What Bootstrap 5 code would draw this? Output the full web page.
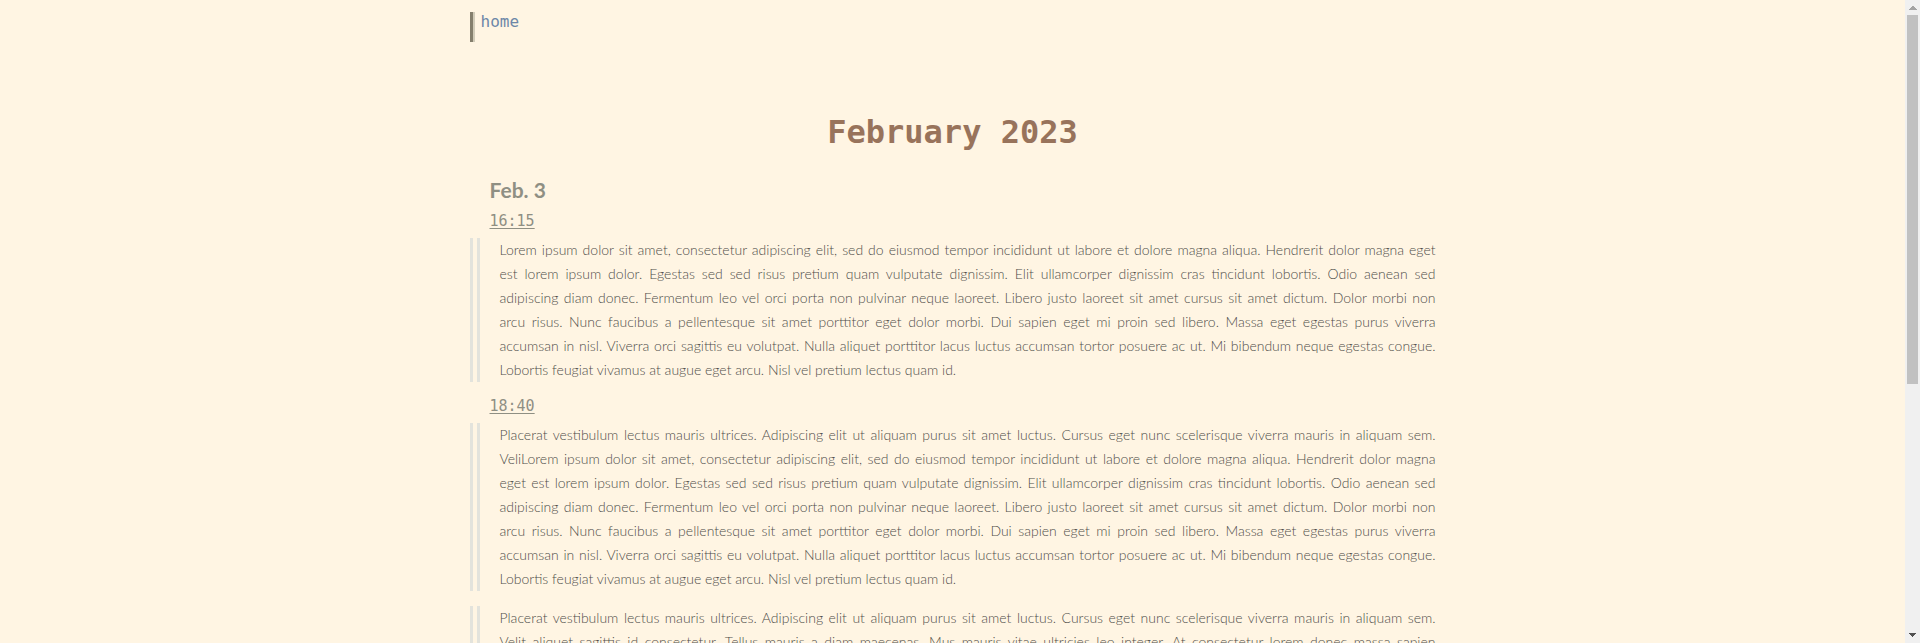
<!DOCTYPE html>
<html lang="en">
<head>
<meta charset="utf-8">
<meta name="viewport" content="width=device-width, initial-scale=1">
<title>February 2023</title>
<link rel="stylesheet" href="https://cdn.jsdelivr.net/npm/bootstrap@5.3.0/dist/css/bootstrap.min.css">
<style>
  body { background: #fff5e3; color: #4f4e4a; }
  .journal { max-width: 966px; }
  .mono { font-family: "DejaVu Sans Mono", monospace; }
  .site-nav { height: 30px; margin-top: 12px; border-left: 3px solid #857f6d; box-shadow: inset 2px 0 #d2ccb9; padding-left: 8px; }
  .site-nav a { color: #6d87a8; font-size: 16px; line-height: 20px; }
  .month { color: #98735b; font-size: 32px; line-height: 40px; margin-top: 70px; }
  .day { color: #8f8f83; font-family: Lato, sans-serif; font-size: 21px; line-height: 28px; margin: 24px 0 0 20px; }
  .stamp { color: #8f8f83; font-size: 15px; line-height: 19px; margin: 8px 0 7px 20px; }
  .stamp a { color: inherit; text-underline-offset: 2px; }
  .entry { border-left: 10px double #e3e3dc; padding-left: 20px; font-family: Lato, sans-serif; font-weight: 300; font-size: 14px; line-height: 24px; margin-bottom: 15px; }
  .entry span { display: block; white-space: nowrap; text-align-last: justify; }
  .entry span.end { text-align-last: left; }
  .scroll-rail { width: 15px; background: #f0f0f0; }
  .scroll-thumb { width: 11px; height: 369px; background: #c1c1c1; }
</style>
</head>
<body class="d-flex vh-100 overflow-hidden">
<div class="flex-grow-1 overflow-hidden">
  <div class="journal mx-auto">
    <nav class="site-nav mono d-flex align-items-start"><a href="#" class="text-decoration-none">home</a></nav>
    <main>
      <h1 class="month mono fw-bold text-center mb-0">February 2023</h1>
      <h2 class="day fw-bold">Feb. 3</h2>
      <div class="stamp mono"><a href="#t1615" id="t1615">16:15</a></div>
      <p class="entry">
        <span>Lorem ipsum dolor sit amet, consectetur adipiscing elit, sed do eiusmod tempor incididunt ut labore et dolore magna aliqua. Hendrerit dolor magna eget</span>
        <span>est lorem ipsum dolor. Egestas sed sed risus pretium quam vulputate dignissim. Elit ullamcorper dignissim cras tincidunt lobortis. Odio aenean sed</span>
        <span>adipiscing diam donec. Fermentum leo vel orci porta non pulvinar neque laoreet. Libero justo laoreet sit amet cursus sit amet dictum. Dolor morbi non</span>
        <span>arcu risus. Nunc faucibus a pellentesque sit amet porttitor eget dolor morbi. Dui sapien eget mi proin sed libero. Massa eget egestas purus viverra</span>
        <span>accumsan in nisl. Viverra orci sagittis eu volutpat. Nulla aliquet porttitor lacus luctus accumsan tortor posuere ac ut. Mi bibendum neque egestas congue.</span>
        <span class="end">Lobortis feugiat vivamus at augue eget arcu. Nisl vel pretium lectus quam id.</span>
      </p>
      <div class="stamp mono"><a href="#t1840" id="t1840">18:40</a></div>
      <p class="entry">
        <span>Placerat vestibulum lectus mauris ultrices. Adipiscing elit ut aliquam purus sit amet luctus. Cursus eget nunc scelerisque viverra mauris in aliquam sem.</span>
        <span>VeliLorem ipsum dolor sit amet, consectetur adipiscing elit, sed do eiusmod tempor incididunt ut labore et dolore magna aliqua. Hendrerit dolor magna</span>
        <span>eget est lorem ipsum dolor. Egestas sed sed risus pretium quam vulputate dignissim. Elit ullamcorper dignissim cras tincidunt lobortis. Odio aenean sed</span>
        <span>adipiscing diam donec. Fermentum leo vel orci porta non pulvinar neque laoreet. Libero justo laoreet sit amet cursus sit amet dictum. Dolor morbi non</span>
        <span>arcu risus. Nunc faucibus a pellentesque sit amet porttitor eget dolor morbi. Dui sapien eget mi proin sed libero. Massa eget egestas purus viverra</span>
        <span>accumsan in nisl. Viverra orci sagittis eu volutpat. Nulla aliquet porttitor lacus luctus accumsan tortor posuere ac ut. Mi bibendum neque egestas congue.</span>
        <span class="end">Lobortis feugiat vivamus at augue eget arcu. Nisl vel pretium lectus quam id.</span>
      </p>
      <p class="entry">
        <span>Placerat vestibulum lectus mauris ultrices. Adipiscing elit ut aliquam purus sit amet luctus. Cursus eget nunc scelerisque viverra mauris in aliquam sem.</span>
        <span>Velit aliquet sagittis id consectetur. Tellus mauris a diam maecenas. Mus mauris vitae ultricies leo integer. At consectetur lorem donec massa sapien</span>
      </p>
    </main>
  </div>
</div>
<div class="scroll-rail d-flex flex-column align-items-center flex-shrink-0" aria-hidden="true">
  <svg width="15" height="15" viewBox="0 0 15 15" shape-rendering="crispEdges"><path d="M7 6h2v1h1v1h1v1h1v1H4V9h1V8h1V7h1z" fill="#a3a3a3"/></svg>
  <div class="scroll-thumb"></div>
  <svg class="mt-auto" width="15" height="15" viewBox="0 0 15 15" shape-rendering="crispEdges"><path d="M4 5h7v1h-1v1H9v1H8v1H7V8H6V7H5V6H4z" fill="#505050"/></svg>
</div>
<script src="https://cdn.jsdelivr.net/npm/bootstrap@5.3.0/dist/js/bootstrap.bundle.min.js"></script>
</body>
</html>
